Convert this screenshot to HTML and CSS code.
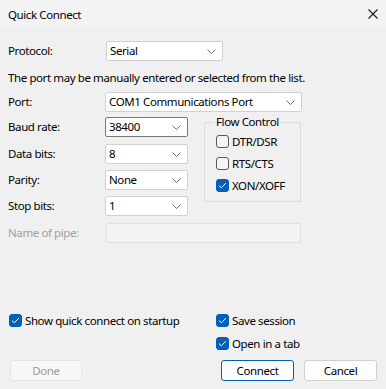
FILE: index.html
```html
<!DOCTYPE html>
<html>
<head>
<meta charset="utf-8">
<link rel="stylesheet" href="styles.css">
</head>
<body>
<div class="dialog">
  <div class="titlebar">
    <span class="title">Quick Connect</span>
    <span class="close"><svg width="10" height="10" viewBox="0 0 10 10"><path d="M0.5 0.5 L9.5 9.5 M9.5 0.5 L0.5 9.5" stroke="#1a1a1a" stroke-width="1.1" fill="none"/></svg></span>
  </div>
  <div class="content">
    <div class="row protocol">
      <label class="lbl">Protocol:</label>
      <div class="select w-protocol"><span>Serial</span><svg class="chev" width="9" height="5" viewBox="0 0 9 5"><path d="M0.5 0.5 L4.5 4.5 L8.5 0.5" stroke="#6b6b6b" fill="none" stroke-width="1"/></svg></div>
    </div>
    <div class="note">The port may be manually entered or selected from the list.</div>
    <div class="row port">
      <label class="lbl">Port:</label>
      <div class="select w-port"><span>COM1 Communications Port</span><svg class="chev" width="9" height="5" viewBox="0 0 9 5"><path d="M0.5 0.5 L4.5 4.5 L8.5 0.5" stroke="#6b6b6b" fill="none" stroke-width="1"/></svg></div>
    </div>
    <div class="split">
      <div class="leftcol">
        <div class="row">
          <label class="lbl">Baud rate:</label>
          <div class="select w-small focus"><span>38400</span><svg class="chev" width="9" height="5" viewBox="0 0 9 5"><path d="M0.5 0.5 L4.5 4.5 L8.5 0.5" stroke="#6b6b6b" fill="none" stroke-width="1"/></svg></div>
        </div>
        <div class="row first-gap">
          <label class="lbl">Data bits:</label>
          <div class="select w-small"><span>8</span><svg class="chev" width="9" height="5" viewBox="0 0 9 5"><path d="M0.5 0.5 L4.5 4.5 L8.5 0.5" stroke="#6b6b6b" fill="none" stroke-width="1"/></svg></div>
        </div>
        <div class="row">
          <label class="lbl">Parity:</label>
          <div class="select w-small"><span>None</span><svg class="chev" width="9" height="5" viewBox="0 0 9 5"><path d="M0.5 0.5 L4.5 4.5 L8.5 0.5" stroke="#6b6b6b" fill="none" stroke-width="1"/></svg></div>
        </div>
        <div class="row">
          <label class="lbl">Stop bits:</label>
          <div class="select w-small"><span>1</span><svg class="chev" width="9" height="5" viewBox="0 0 9 5"><path d="M0.5 0.5 L4.5 4.5 L8.5 0.5" stroke="#6b6b6b" fill="none" stroke-width="1"/></svg></div>
        </div>
      </div>
      <fieldset class="group">
        <legend>Flow Control</legend>
        <div class="check"><span class="box"></span><span>DTR/DSR</span></div>
        <div class="check"><span class="box"></span><span>RTS/CTS</span></div>
        <div class="check"><span class="box on"><svg width="9" height="7" viewBox="0 0 9 7"><path d="M1 3.6 L3.3 5.8 L8 1" stroke="#fff" stroke-width="1" fill="none"/></svg></span><span>XON/XOFF</span></div>
      </fieldset>
    </div>
    <div class="row pipe">
      <label class="lbl disabled">Name of pipe:</label>
      <div class="input-disabled"></div>
    </div>
    <div class="checks">
      <div class="check"><span class="box on"><svg width="9" height="7" viewBox="0 0 9 7"><path d="M1 3.6 L3.3 5.8 L8 1" stroke="#fff" stroke-width="1" fill="none"/></svg></span><span>Show quick connect on startup</span></div>
      <div class="rightchecks">
        <div class="check"><span class="box on"><svg width="9" height="7" viewBox="0 0 9 7"><path d="M1 3.6 L3.3 5.8 L8 1" stroke="#fff" stroke-width="1" fill="none"/></svg></span><span>Save session</span></div>
        <div class="check"><span class="box on"><svg width="9" height="7" viewBox="0 0 9 7"><path d="M1 3.6 L3.3 5.8 L8 1" stroke="#fff" stroke-width="1" fill="none"/></svg></span><span>Open in a tab</span></div>
      </div>
    </div>
    <div class="buttons">
      <button class="btn done">Done</button>
      <div class="btn-group">
        <button class="btn default">Connect</button>
        <button class="btn">Cancel</button>
      </div>
    </div>
  </div>
</div>
</body>
</html>
```
FILE: styles.css
```css
* { box-sizing: border-box; }
html, body { margin: 0; padding: 0; }
body {
  width: 386px;
  height: 389px;
  background: #f0f0f0;
  font-family: "Noto Sans", "Open Sans", sans-serif;
  font-size: 11.5px;
  letter-spacing: -0.4px;
  color: #000;
  overflow: hidden;
}
.dialog { width: 386px; height: 389px; display: flex; flex-direction: column; }
.titlebar {
  height: 28px;
  background: #f3f3f3;
  display: flex;
  align-items: center;
  justify-content: space-between;
  padding-left: 8px;
}
.title { color: #000; }
.close { width: 10px; height: 10px; margin-right: 8px; margin-top: 0; }
.close svg { display: block; }
.content { padding: 0 8px; display: flex; flex-direction: column; flex: 1; }
.row { display: flex; align-items: center; height: 20px; }
.lbl { width: 97px; flex: none; line-height: 20px; }
.lbl.disabled { color: #a0a0a0; }
.protocol { margin-top: 13px; }
.protocol .lbl { width: 98px; }
.note { margin-top: 9px; height: 16px; line-height: 16px; }
.port { margin-top: 6px; }
.select {
  height: 20px;
  background: #fff;
  border: 1px solid #d0d0d0;
  border-radius: 2px;
  display: flex;
  align-items: center;
  justify-content: space-between;
  padding: 0 6px 0 3px;
  line-height: 18px;
}
.select.focus { border-color: #7a7a7a; }
.chev { display: block; flex: none; }
.w-protocol { width: 117px; }
.w-port { width: 197px; }
.w-small { width: 83px; }
.split { display: flex; align-items: flex-start; margin-top: 5px; }
.leftcol { display: flex; flex-direction: column; gap: 6px; width: 180px; }
.leftcol .first-gap { margin-top: 1px; }
.group {
  margin: -1px 0 0 16px;
  padding: 6px 0 0 11px;
  width: 97px;
  height: 86px;
  border: 1px solid #dcdcdc;
  display: flex;
  flex-direction: column;
  gap: 8px;
  min-width: 0;
}
.group legend { padding: 0 2px; margin-left: -2px; line-height: 12px; }
.check { display: flex; align-items: center; gap: 3px; height: 14px; }
.box {
  width: 13px; height: 13px;
  border: 1px solid #5a5a5a;
  border-radius: 3px;
  background: #f5f5f5;
  display: flex; align-items: center; justify-content: center;
  flex: none;
}
.box.on { background: #005fb8; border-color: #005fb8; }
.box svg { display: block; }
.pipe { margin-top: 7px; }
.pipe .lbl { width: 98px; }
.input-disabled {
  width: 195px; height: 20px;
  border: 1px solid #e0e0e0;
  background: #f3f3f3;
  border-radius: 2px;
}
.checks { margin-top: 70px; display: flex; align-items: flex-start; }
.checks > .check { width: 208px; padding-left: 1px; }
.rightchecks { display: flex; flex-direction: column; gap: 9px; }
.buttons { margin-top: 10px; display: flex; justify-content: space-between; padding: 0 1px 0 2px; }
.btn-group { display: flex; gap: 10px; }
.btn {
  font-family: inherit;
  font-size: 11.5px;
  letter-spacing: -0.4px;
  width: 73px;
  height: 21px;
  padding: 0;
  background: #fdfdfd;
  border: 1px solid #d0d0d0;
  border-radius: 3px;
  color: #000;
}
.btn.default { border-color: #005fb8; }
.btn.done { width: 72px; background: #f8f8f8; border-color: #e5e5e5; color: #9a9a9a; }
```
